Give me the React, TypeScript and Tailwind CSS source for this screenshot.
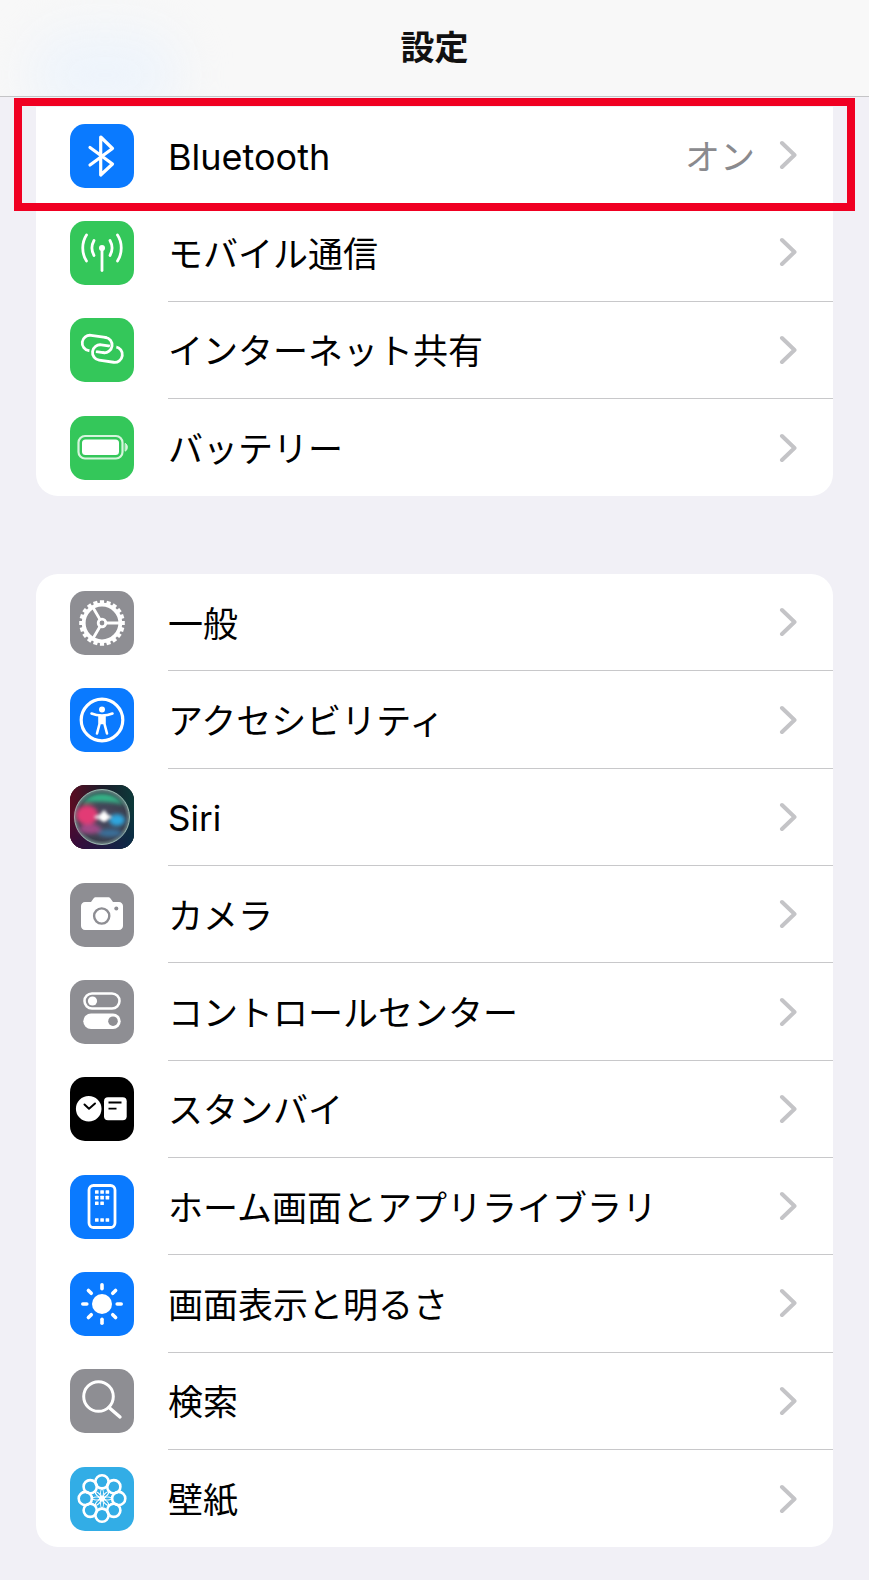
import type { ReactNode } from "react";

const angles = [0, 45, 90, 135, 180, 225, 270, 315];
const teeth = Array.from({ length: 20 }, (_, i) => i * 18);

function Glyph({ children }: { children: ReactNode }) {
  return (
    <svg viewBox="0 0 64 64" className="w-16 h-16" fill="none" stroke="#fff" strokeLinecap="round" strokeLinejoin="round">
      {children}
    </svg>
  );
}

const BluetoothIcon = () => (
  <Glyph>
    <path d="M20 23.5 42.5 40 30.7 51V13L42.5 24.5 20 41" strokeWidth="3.2" />
  </Glyph>
);

const CellularIcon = () => (
  <Glyph>
    <circle cx="32" cy="27" r="3" fill="#fff" stroke="none" />
    <path d="M32 28V49.5" strokeWidth="2.8" />
    <path d="M24 19.5C21.5 24 21.5 30 24 34.5M40 19.5C42.5 24 42.5 30 40 34.5" strokeWidth="2.8" />
    <path d="M16.5 14C11.5 21.5 11.5 32.5 16.5 40M47.5 14C52.5 21.5 52.5 32.5 47.5 40" strokeWidth="2.8" />
  </Glyph>
);

const HotspotIcon = () => (
  <Glyph>
    <g transform="rotate(8 32 31)" strokeWidth="2.8">
      <rect x="11.5" y="19" width="30" height="15.5" rx="7.7" />
      <rect x="23" y="27" width="30" height="15.5" rx="7.7" stroke="#34c75a" strokeWidth="6.5" />
      <rect x="23" y="27" width="30" height="15.5" rx="7.7" />
      <path d="M35 19A7.7 7.7 0 0 1 35 34.5" stroke="#34c75a" strokeWidth="6.5" strokeLinecap="butt" />
      <path d="M33.8 19H33.8A7.7 7.7 0 0 1 33.8 34.5" />
    </g>
  </Glyph>
);

const BatteryIcon = () => (
  <Glyph>
    <rect x="8.5" y="20" width="44" height="22.5" rx="6.5" stroke="#d6f5dd" strokeWidth="2.2" />
    <rect x="12" y="23.5" width="37" height="15.5" rx="3.5" fill="#fff" stroke="none" />
    <path d="M55.5 27.5C58 28.5 58 34 55.5 35Z" fill="#d6f5dd" stroke="#d6f5dd" strokeWidth="1" />
  </Glyph>
);

const GearIcon = () => (
  <Glyph>
    {teeth.map((a) => (
      <path key={a} d="M32 9.2V14" strokeWidth="4.2" strokeLinecap="butt" transform={`rotate(${a} 32 32)`} />
    ))}
    <circle cx="32" cy="32" r="18.3" strokeWidth="3.8" />
    <circle cx="32" cy="32" r="3.8" strokeWidth="2.8" />
    <path d="M36 32H50M30 35.5 23 47.5M30 28.5 23 16.5" strokeWidth="2.8" />
  </Glyph>
);

const AccessibilityIcon = () => (
  <Glyph>
    <circle cx="32" cy="32" r="20.8" strokeWidth="3.2" />
    <circle cx="32" cy="21.5" r="3" fill="#fff" stroke="none" />
    <path d="M21.5 25.5C25 27 28.5 27.5 32 27.5S39 27 42.5 25.5" strokeWidth="2.6" />
    <path d="M29.5 27.5V36L27 45.5M34.5 27.5V36L37 45.5M29.5 35H34.5" strokeWidth="2.6" />
    <path d="M30 27.5H34V36H30Z" fill="#fff" stroke="none" />
  </Glyph>
);

const SiriIcon = () => (
  <svg viewBox="0 0 64 64" className="w-16 h-16">
    <defs>
      <linearGradient id="siri-a" x1="0" y1="0" x2="1" y2="0">
        <stop offset="0" stopColor="#5c0c22" />
        <stop offset="0.5" stopColor="#1c1c2a" />
        <stop offset="1" stopColor="#0c3a3a" />
      </linearGradient>
      <linearGradient id="siri-b" x1="0" y1="0" x2="1" y2="0">
        <stop offset="0" stopColor="#3a0a3e" />
        <stop offset="1" stopColor="#0a2a4a" />
      </linearGradient>
      <linearGradient id="siri-fade" x1="0" y1="0" x2="0" y2="1">
        <stop offset="0.35" stopColor="#fff" stopOpacity="0" />
        <stop offset="1" stopColor="#fff" stopOpacity="1" />
      </linearGradient>
      <mask id="siri-mask">
        <rect width="64" height="64" fill="url(#siri-fade)" />
      </mask>
      <radialGradient id="siri-sphere">
        <stop offset="0" stopColor="#4a4a60" />
        <stop offset="0.85" stopColor="#3b3f4e" />
        <stop offset="1" stopColor="#6f8585" />
      </radialGradient>
      <filter id="siri-blur" x="-50%" y="-50%" width="200%" height="200%">
        <feGaussianBlur stdDeviation="2" />
      </filter>
      <filter id="siri-blur-s" x="-80%" y="-80%" width="260%" height="260%">
        <feGaussianBlur stdDeviation="1.8" />
      </filter>
    </defs>
    <rect width="64" height="64" fill="url(#siri-a)" />
    <rect width="64" height="64" fill="url(#siri-b)" mask="url(#siri-mask)" />
    <circle cx="32" cy="32" r="27.5" fill="url(#siri-sphere)" stroke="#a8c4bb" strokeWidth="0.9" />
    <g filter="url(#siri-blur)">
      <path d="M12 18C22 5 44 5 54 20 44 16 24 16 12 18Z" fill="#34b487" />
      <ellipse cx="17" cy="30" rx="11" ry="10" fill="#e23a74" />
      <ellipse cx="20" cy="44" rx="11" ry="5" fill="#a04a86" />
      <ellipse cx="47" cy="35" rx="8" ry="6" fill="#2da6de" />
      <ellipse cx="40" cy="48" rx="12" ry="4" fill="#3a6f9a" />
    </g>
    <g filter="url(#siri-blur-s)">
      <ellipse cx="33" cy="32" rx="9" ry="3" fill="#fff" opacity="0.7" />
      <ellipse cx="34" cy="31" rx="3" ry="6" fill="#fff" opacity="0.7" />
      <circle cx="34" cy="32" r="4.5" fill="#fff" />
    </g>
  </svg>
);

const CameraIcon = () => (
  <Glyph>
    <path
      d="M15 19H21L23.5 15.5C24 14.7 25 14.3 26 14.3H38C39 14.3 40 14.7 40.5 15.5L43 19H49C51.2 19 53 20.8 53 23V43C53 45.2 51.2 47 49 47H15C12.8 47 11 45.2 11 43V23C11 20.8 12.8 19 15 19Z"
      fill="#fff"
      stroke="none"
    />
    <circle cx="31.7" cy="33" r="7.6" stroke="#8e8e93" strokeWidth="2.4" />
    <circle cx="46.3" cy="25.5" r="2" fill="#8e8e93" stroke="none" />
  </Glyph>
);

const ControlCenterIcon = () => (
  <Glyph>
    <rect x="14.5" y="13.5" width="35" height="15" rx="7.5" strokeWidth="2.6" />
    <circle cx="22.5" cy="21" r="4.6" fill="#fff" stroke="none" />
    <rect x="13.3" y="33.5" width="37.4" height="15.5" rx="7.7" fill="#fff" stroke="none" />
    <circle cx="43" cy="41.2" r="4.8" fill="#8e8e93" stroke="none" />
  </Glyph>
);

const StandByIcon = () => (
  <Glyph>
    <circle cx="18.7" cy="31.7" r="12.8" fill="#fff" stroke="none" />
    <path d="M14.5 27.5 19 31.7 25 26.5" stroke="#000" strokeWidth="2" />
    <rect x="34" y="20.3" width="22.7" height="23" rx="4" fill="#fff" stroke="none" />
    <path d="M38.5 25.5H51.5M38.5 31.7H46.5" stroke="#000" strokeWidth="1.8" strokeLinecap="butt" />
  </Glyph>
);

const HomeScreenIcon = () => (
  <Glyph>
    <rect x="19" y="10.5" width="26" height="42" rx="4.5" strokeWidth="2.8" />
    <g fill="#fff" stroke="none">
      {[25, 30.3, 35.6].map((x) =>
        [15.2, 20.8, 26.4].map((y) =>
          y === 26.4 && x === 35.6 ? null : <rect key={`${x}-${y}`} x={x} y={y} width="3.6" height="3.6" rx="0.5" />
        )
      )}
      {[25, 30.3, 35.6].map((x) => (
        <rect key={x} x={x} y="43.2" width="3.6" height="3.6" rx="0.5" />
      ))}
    </g>
  </Glyph>
);

const BrightnessIcon = () => (
  <Glyph>
    <circle cx="32" cy="32" r="10" fill="#fff" stroke="none" />
    {angles.map((a) => (
      <path key={a} d="M32 12.8V16.8" strokeWidth="3.6" transform={`rotate(${a} 32 32)`} />
    ))}
  </Glyph>
);

const SearchIcon = () => (
  <Glyph>
    <circle cx="28.5" cy="27.5" r="14.8" strokeWidth="3" />
    <path d="M39 38.5 50 48" strokeWidth="3.4" />
  </Glyph>
);

const WallpaperIcon = () => (
  <Glyph>
    {angles.map((a) => (
      <g key={a} transform={`rotate(${a} 32 31.5)`}>
        <circle cx="32" cy="14.8" r="6.6" strokeWidth="2.6" />
        <path d="M32 31.5C30 27 30 24 32 21.5 34 24 34 27 32 31.5Z" strokeWidth="1" />
      </g>
    ))}
    <circle cx="32" cy="31.5" r="3" fill="#fff" stroke="none" />
  </Glyph>
);

type Item = { label: string; bg: string; icon: ReactNode; value?: string; size?: string };

const connectivity: Item[] = [
  { label: "Bluetooth", bg: "bg-[#0a7aff]", icon: <BluetoothIcon />, value: "オン", size: "text-[36px]" },
  { label: "モバイル通信", bg: "bg-[#34c75a]", icon: <CellularIcon /> },
  { label: "インターネット共有", bg: "bg-[#34c75a]", icon: <HotspotIcon /> },
  { label: "バッテリー", bg: "bg-[#34c75a]", icon: <BatteryIcon /> },
];

const system: Item[] = [
  { label: "一般", bg: "bg-[#8e8e93]", icon: <GearIcon /> },
  { label: "アクセシビリティ", bg: "bg-[#0a7aff]", icon: <AccessibilityIcon /> },
  { label: "Siri", bg: "bg-black", icon: <SiriIcon /> },
  { label: "カメラ", bg: "bg-[#8e8e93]", icon: <CameraIcon /> },
  { label: "コントロールセンター", bg: "bg-[#8e8e93]", icon: <ControlCenterIcon /> },
  { label: "スタンバイ", bg: "bg-black", icon: <StandByIcon /> },
  { label: "ホーム画面とアプリライブラリ", bg: "bg-[#0a7aff]", icon: <HomeScreenIcon /> },
  { label: "画面表示と明るさ", bg: "bg-[#0a7aff]", icon: <BrightnessIcon /> },
  { label: "検索", bg: "bg-[#8e8e93]", icon: <SearchIcon /> },
  { label: "壁紙", bg: "bg-[#32ade6]", icon: <WallpaperIcon /> },
];

function Row({ item, last }: { item: Item; last: boolean }) {
  return (
    <div className="flex items-center h-[97.3px] pl-[34px]">
      <div className={`w-16 h-16 rounded-[15px] overflow-hidden shrink-0 ${item.bg}`}>{item.icon}</div>
      <div className={`flex flex-1 items-center h-full ml-[34px] pr-[36px] ${last ? "" : "border-b border-[#c8c8ca]"}`}>
        <span className={`flex-1 pt-1 leading-none text-black ${item.size ?? "text-[35px]"}`}>{item.label}</span>
        {item.value && <span className="pt-1 text-[35px] leading-none text-[#8a8a8e] mr-[24px]">{item.value}</span>}
        <svg viewBox="0 0 18 30" className="w-[18px] h-[30px]" fill="none" stroke="#c4c4c7" strokeWidth="4" strokeLinecap="round" strokeLinejoin="round">
          <path d="M3 3 15.5 15 3 27" />
        </svg>
      </div>
    </div>
  );
}

function Group({ items, className }: { items: Item[]; className: string }) {
  return (
    <div className={`mx-9 bg-white overflow-hidden ${className}`}>
      {items.map((item, i) => (
        <Row key={item.label} item={item} last={i === items.length - 1} />
      ))}
    </div>
  );
}

export default function App() {
  return (
    <div className="relative h-[1580px] overflow-hidden bg-[#f1f0f6] font-['Inter','Noto_Sans_CJK_JP',sans-serif]">
      <header className="relative flex items-center justify-center h-[97px] bg-[#f8f8f8] border-b border-[#c4c4c6] overflow-hidden">
        <div className="absolute left-[30px] top-[30px] w-[150px] h-[90px] rounded-full bg-[#eef4fb] blur-[24px]" />
        <h1 className="relative text-[34px] font-bold leading-none text-[#111]">設定</h1>
      </header>
      <Group items={connectivity} className="mt-[10px] rounded-b-[22px]" />
      <Group items={system} className="mt-[78px] rounded-[22px]" />
      <div className="absolute left-[14px] top-[98px] w-[841px] h-[113px] border-8 border-[#f00022]" />
    </div>
  );
}
